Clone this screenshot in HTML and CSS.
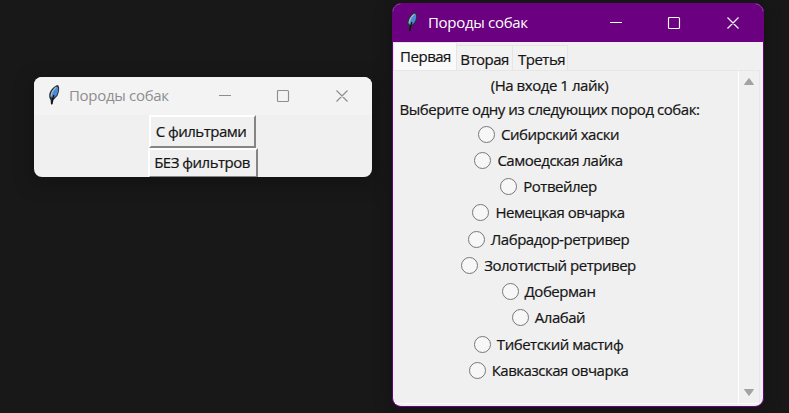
FILE: index.html
```html
<!DOCTYPE html>
<html lang="ru">
<head>
<meta charset="utf-8">
<title>Породы собак</title>
<link rel="stylesheet" href="styles.css">
</head>
<body>
<svg width="0" height="0" class="defs" aria-hidden="true">
  <defs>
    <symbol id="feather" viewBox="0 0 14 22">
      <path d="M10.5 1 C13 2 12.500 8 10.300 12 L6.500 16 L5.300 20.500 L4 20.500 L3.600 16 C1.300 13 2 8.500 4.500 5.500 C6.500 3 9 1.500 10.500 1Z" fill="#2b3038"/>
      <path d="M10.200 2.500 C12 5 11 9 9 12 L5.500 14.500 C3 12.500 3.500 8.500 5.800 6Z" fill="#4a8ad8"/>
      <path d="M9.400 3 C6.500 5.500 4.500 8 4 12.500" fill="none" stroke="#a9b8c4" stroke-width="1.200"/>
      <path d="M7 11 C6 13 5.300 15 4.700 20" fill="none" stroke="#0c1016" stroke-width="1.300"/>
    </symbol>
    <symbol id="controls" viewBox="0 0 130 14">
      <path d="M0 6.500H12M59.500 1.500H68.500Q69.500 1.500 69.500 2.500V11.500Q69.500 12.500 68.500 12.500H59.500Q58.500 12.500 58.500 11.500V2.500Q58.500 1.500 59.500 1.500ZM117.500 1.500L128.500 12.500M128.500 1.500L117.500 12.500" fill="none" stroke="currentColor" stroke-width="1.150"/>
    </symbol>
  </defs>
</svg>
<main class="desktop">
  <section class="window launcher">
    <header class="titlebar">
      <svg class="feather"><use href="#feather"/></svg>
      <h1>Породы собак</h1>
      <svg class="controls"><use href="#controls"/></svg>
    </header>
    <div class="actions">
      <button class="with">С фильтрами</button>
      <button class="without">БЕЗ фильтров</button>
    </div>
  </section>
  <section class="window breeds">
    <header class="titlebar">
      <svg class="feather"><use href="#feather"/></svg>
      <h1>Породы собак</h1>
      <svg class="controls"><use href="#controls"/></svg>
    </header>
    <nav class="tabs">
      <span class="tab active">Первая</span><span class="tab second">Вторая</span><span class="tab third">Третья</span>
    </nav>
    <div class="page">
      <div class="content">
        <p class="note">(На входе 1 лайк)</p>
        <p class="prompt">Выберите одну из следующих пород собак:</p>
        <ul class="options">
          <li><i></i><span>Сибирский хаски</span></li>
          <li><i></i><span>Самоедская лайка</span></li>
          <li><i></i><span>Ротвейлер</span></li>
          <li><i></i><span>Немецкая овчарка</span></li>
          <li><i></i><span>Лабрадор-ретривер</span></li>
          <li><i></i><span>Золотистый ретривер</span></li>
          <li><i></i><span>Доберман</span></li>
          <li><i></i><span>Алабай</span></li>
          <li><i></i><span>Тибетский мастиф</span></li>
          <li><i></i><span>Кавказская овчарка</span></li>
        </ul>
      </div>
      <div class="scrollbar">
        <svg class="arrow" viewBox="0 0 12 9"><path d="M6 1.500L10.500 7.500H1.500Z"/></svg>
        <svg class="arrow" viewBox="0 0 12 9"><path d="M6 7.500L10.500 1.500H1.500Z"/></svg>
      </div>
    </div>
  </section>
</main>
</body>
</html>
```
FILE: styles.css
```css
* { box-sizing: border-box; }
body { margin: 0; background: #181818; font: 15px/20px "Open Sans", "Noto Sans", sans-serif; color: #151515; overflow: hidden; }
.defs { position: absolute; }
.desktop { position: relative; width: 789px; height: 413px; }
.window { position: absolute; overflow: hidden; background: #f0f0f0; white-space: nowrap; }
.launcher { left: 34px; top: 77px; width: 338px; height: 100px; border-radius: 8px; box-shadow: 0 5px 18px #121212; }
.breeds { left: 392px; top: 3px; width: 372px; height: 404px; border: 1px solid #6b0080; border-radius: 9px; box-shadow: 0 3px 16px #121212; }
.titlebar { display: flex; align-items: center; height: 38px; background: #f3f3f3; color: #8e8e8e; padding-left: 13px; }
.breeds .titlebar { background: #6b0080; color: #fff; padding-left: 12px; }
.feather { width: 14px; height: 22px; margin-top: -2px; }
h1 { margin: -2px 0 0 8px; width: 100px; font-size: 15px; font-weight: 400; letter-spacing: -.3px; }
.breeds h1 { margin-left: 9px; }
.controls { width: 130px; height: 14px; margin-left: 50px; }
.breeds .controls { margin-left: 82px; }
.actions { display: flex; flex-direction: column; align-items: center; }
button { display: block; padding: 0 2px 2px 0; font: inherit; color: inherit; background: #f0f0f0; border: 2px solid; border-color: #fff #858585 #858585 #fff; white-space: nowrap; letter-spacing: -.5px; -webkit-text-stroke: .2px; }
.with { width: 107px; height: 33px; margin-right: 2px; }
.without { width: 110px; height: 30px; }
.tabs { display: flex; align-items: flex-end; height: 28px; letter-spacing: -.5px; -webkit-text-stroke: .2px; }
.tab { height: 25px; padding-top: 3px; text-align: center; border: 1px solid #e5e5e5; border-bottom: 0; background: #f2f2f2; }
.tab.active { width: 64px; height: 28px; padding-left: 1px; background: #fafafa; }
.second { width: 56px; border-left: 0; }
.third { width: 55px; border-left: 0; padding-left: 3px; }
.page { display: flex; height: 334px; margin-right: 3px; border: 1px solid #e7e7e7; border-left: 0; border-bottom-color: #fafafa; }
.content { width: 346px; padding: 4px 32px 0 0; border-right: 1px solid #fff; -webkit-text-stroke: .2px; }
p { margin: 0; text-align: center; letter-spacing: -.45px; }
.prompt { margin-top: 4px; }
.options { margin: 2px 2px 0 0; padding: 0; list-style: none; }
li { display: flex; align-items: center; justify-content: center; height: 26.250px; letter-spacing: -.48px; }
li i { width: 17px; height: 17px; margin-right: 6px; border: 1.500px solid #777; border-radius: 50%; background: #f7f7f7; }
li span { margin-top: -1px; }
.scrollbar { flex: 1; display: flex; flex-direction: column; align-items: center; justify-content: space-between; padding: 6px 0 6px; }
.arrow { width: 12px; height: 9px; fill: #a3a3a3; stroke: #a3a3a3; stroke-linejoin: round; }
```
